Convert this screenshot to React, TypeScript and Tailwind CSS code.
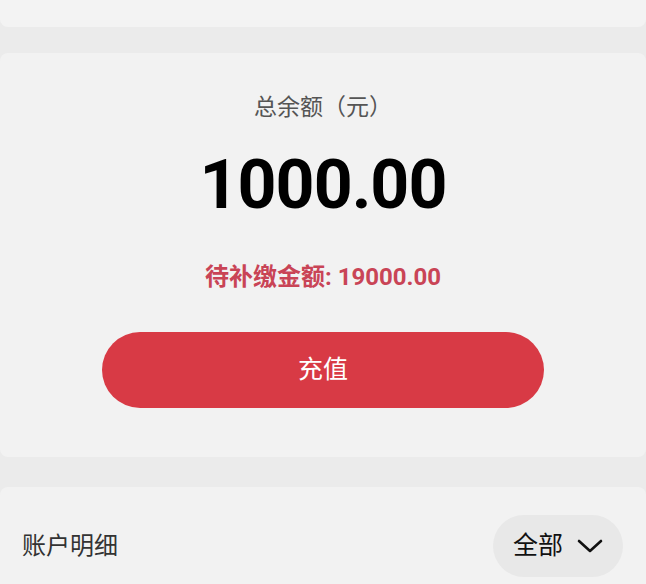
const App = () => {
  return (
    <div
      className="min-h-screen w-full bg-[#ebebeb] flex flex-col"
      style={{ fontFamily: '"Roboto", "Noto Sans CJK SC", sans-serif' }}
    >
      {/* top card (cut off) */}
      <div className="h-[27px] bg-[#f3f3f3] rounded-b-lg" />

      {/* balance card */}
      <div className="mt-[26px] h-[404px] bg-[#f2f2f2] rounded-lg flex flex-col items-center pt-[40px]">
        <div className="text-[23px] leading-[30px] text-[#555555]">总余额（元）</div>
        <div className="mt-[22px] text-[68px] leading-[80px] font-bold text-black tracking-[-1px]">
          1000.00
        </div>
        <div className="mt-[37px] text-[24px] leading-[30px] font-bold text-[#c94456]">
          待补缴金额: 19000.00
        </div>
        <button className="mt-[40px] w-[442px] h-[76px] rounded-full bg-[#d83a45] text-white text-[25px]">
          充值
        </button>
      </div>

      {/* account detail */}
      <div className="mt-[30px] flex-1 bg-[#f2f2f2] rounded-t-lg pt-[28px] pl-[22px] pr-[23px]">
        <div className="flex items-center justify-between">
          <span className="text-[24px] text-[#333333]">账户明细</span>
          <div className="h-[62px] w-[130px] rounded-full bg-[#e8e8e8] flex items-center justify-center gap-[14px]">
            <span className="text-[25px] text-[#111111]">全部</span>
            <svg width="26" height="14" viewBox="0 0 26 14" fill="none">
              <polyline
                points="2,2 13,12 24,2"
                stroke="#111111"
                strokeWidth="2.6"
                strokeLinecap="round"
                strokeLinejoin="round"
              />
            </svg>
          </div>
        </div>
      </div>
    </div>
  );
};

export default App;
